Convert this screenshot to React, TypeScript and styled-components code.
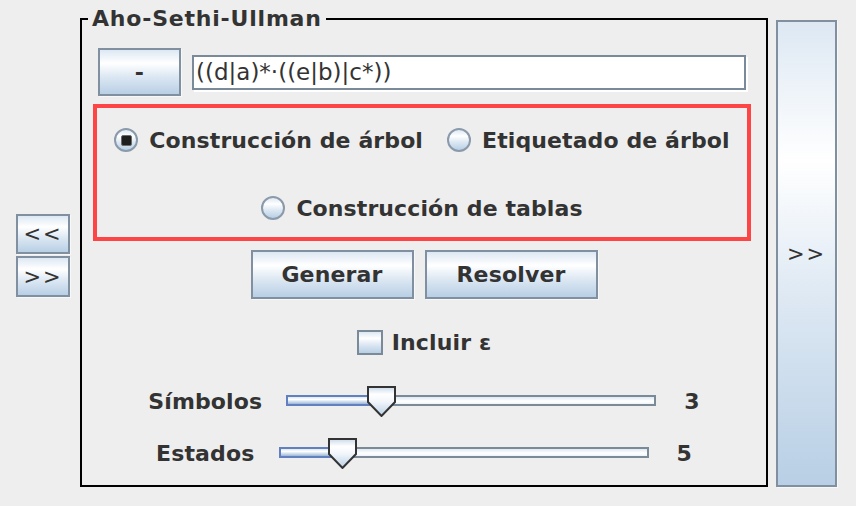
import React from "react";
import styled, { createGlobalStyle, css } from "styled-components";

const GlobalStyle = createGlobalStyle`
  html, body { margin: 0; padding: 0; background: #eeeeee; }
  body { font-family: "DejaVu Sans", "Noto Sans", sans-serif; color: #333333; }
  * { box-sizing: border-box; }
`;

const ocean = css`
  background: linear-gradient(
    to bottom,
    #dde8f3 0%,
    #ffffff 30%,
    #dde8f3 60%,
    #b8cfe5 100%
  );
`;

const Page = styled.div`
  width: 856px;
  height: 506px;
  display: flex;
  align-items: stretch;
  padding: 7px 19px 19px 16px;
`;

const SideColumn = styled.div`
  display: flex;
  flex-direction: column;
  gap: 2px;
  align-self: flex-start;
  margin-top: 207px;
  margin-right: 10px;
`;

const JButton = styled.button<{ $w: number; $h: number; $bold?: boolean }>`
  ${ocean};
  width: ${(p) => p.$w}px;
  height: ${(p) => p.$h}px;
  border: 2px solid #8090a0;
  box-shadow: 1px 1px 0 #f8f8f8;
  padding: 0;
  margin: 0;
  font-family: "DejaVu Sans", sans-serif;
  font-size: ${(p) => (p.$bold ? 22 : 21)}px;
  font-weight: ${(p) => (p.$bold ? 700 : 400)};
  letter-spacing: ${(p) => (p.$bold ? 0.15 : 2)}px;
  color: #333333;
  display: flex;
  align-items: center;
  justify-content: center;
  cursor: default;
`;

const TallButton = styled(JButton)`
  align-self: stretch;
  height: auto;
  margin-top: 13px;
  margin-left: 8px;
`;

const Panel = styled.fieldset`
  margin: 0;
  padding: 0 0 16px 0;
  width: 688px;
  min-width: 0;
  border: 2px solid #000000;
  display: flex;
  flex-direction: column;
  align-items: center;
`;

const Title = styled.legend`
  margin-left: 6px;
  padding: 0 4px;
  font-size: 22px;
  line-height: 24px;
  font-weight: 700;
  letter-spacing: 0.8px;
  color: #333333;
`;

const TopRow = styled.div`
  align-self: stretch;
  display: flex;
  align-items: center;
  gap: 11px;
  padding: 0 20px 0 16px;
  margin-top: 17px;
`;

const ExprField = styled.input`
  flex: 1;
  height: 35px;
  min-width: 0;
  border: 2px solid #7a8a99;
  box-shadow: 2px 2px 0 #ffffff;
  background: #ffffff;
  font-family: "DejaVu Sans", sans-serif;
  font-size: 23px;
  color: #333333;
  padding: 0 2px;
  outline: none;
`;

const ModeBox = styled.div`
  align-self: stretch;
  margin: 8px 15px 0 11px;
  height: 137px;
  border: 4px solid #fd4545;
  display: flex;
  flex-direction: column;
  align-items: center;
`;

const ModeRow = styled.div<{ $top: number }>`
  display: flex;
  align-items: center;
  gap: 24px;
  height: 24px;
  margin-top: ${(p) => p.$top}px;
`;

const RadioOption = styled.label`
  display: inline-flex;
  align-items: center;
  gap: 11px;
  font-size: 22px;
  font-weight: 700;
  letter-spacing: 0.1px;
  color: #333333;
  white-space: nowrap;
`;

const RadioCircle = styled.span`
  width: 24px;
  height: 24px;
  border-radius: 50%;
  border: 2px solid #8a9aab;
  ${ocean};
  display: flex;
  align-items: center;
  justify-content: center;
`;

const RadioDot = styled.span`
  width: 11px;
  height: 11px;
  border-radius: 2px;
  background: #1e1e1e;
  border: 1px solid #6a6a6a;
`;

const ButtonRow = styled.div`
  display: flex;
  gap: 11px;
  margin-top: 9px;
`;

const CheckRow = styled.label`
  display: flex;
  align-items: center;
  gap: 9px;
  margin-top: 31px;
  font-size: 22px;
  font-weight: 700;
  letter-spacing: 0.15px;
  color: #333333;
`;

const CheckBox = styled.span`
  width: 26px;
  height: 25px;
  border: 2px solid #7a8a99;
  ${ocean};
`;

const SliderRow = styled.div<{ $top: number }>`
  display: flex;
  align-items: center;
  margin-top: ${(p) => p.$top}px;
  height: 31px;
  font-size: 22px;
  font-weight: 700;
  letter-spacing: 0.15px;
  color: #333333;
`;

const SliderLabel = styled.span`
  margin-right: 24px;
`;

const SliderValue = styled.span`
  margin-left: 28px;
`;

const Slider = styled.div`
  position: relative;
  width: 370px;
  height: 31px;
  padding-top: 9px;
`;

const Track = styled.div`
  position: relative;
  height: 11px;
  border: 2px solid #7a8a99;
  background: linear-gradient(to bottom, #dfe8f1 0%, #ffffff 60%, #eef3f8 100%);
`;

const TrackFill = styled.div`
  position: absolute;
  left: -2px;
  top: -2px;
  height: 11px;
  border: 2px solid #6180bf;
  background: linear-gradient(
    to bottom,
    #dde8f3 0%,
    #ffffff 35%,
    #c9d9ea 70%,
    #9db6d6 100%
  );
`;

const Thumb = styled.svg`
  position: absolute;
  top: 0;
  width: 29px;
  height: 31px;
`;

function SliderThumb({ left, id }: { left: number; id: string }) {
  return (
    <Thumb style={{ left }} viewBox="0 0 29 31">
      <defs>
        <linearGradient id={id} x1="0" y1="0" x2="0" y2="1">
          <stop offset="0" stopColor="#c9d9ea" />
          <stop offset="0.25" stopColor="#ffffff" />
          <stop offset="0.5" stopColor="#f2f6fb" />
          <stop offset="1" stopColor="#b8cfe5" />
        </linearGradient>
      </defs>
      <polygon
        points="1,1 28,1 28,16 14.5,30 1,16"
        fill={`url(#${id})`}
        stroke="#333333"
        strokeWidth="2"
        strokeLinejoin="miter"
      />
    </Thumb>
  );
}

function JSlider({ thumbLeft, id }: { thumbLeft: number; id: string }) {
  return (
    <Slider>
      <Track>
        <TrackFill style={{ width: thumbLeft + 16 }} />
      </Track>
      <SliderThumb left={thumbLeft} id={id} />
    </Slider>
  );
}

function Radio({ label, selected }: { label: string; selected?: boolean }) {
  return (
    <RadioOption>
      <RadioCircle>{selected && <RadioDot />}</RadioCircle>
      {label}
    </RadioOption>
  );
}

export default function App() {
  return (
    <>
      <GlobalStyle />
      <Page>
        <SideColumn>
          <JButton $w={54} $h={40}>&lt;&lt;</JButton>
          <JButton $w={54} $h={41}>&gt;&gt;</JButton>
        </SideColumn>
        <Panel>
          <Title>Aho-Sethi-Ullman</Title>
          <TopRow>
            <JButton $w={83} $h={48} $bold>-</JButton>
            <ExprField readOnly value="((d|a)*·((e|b)|c*))" />
          </TopRow>
          <ModeBox>
            <ModeRow $top={20}>
              <Radio label="Construcción de árbol" selected />
              <Radio label="Etiquetado de árbol" />
            </ModeRow>
            <ModeRow $top={44}>
              <Radio label="Construcción de tablas" />
            </ModeRow>
          </ModeBox>
          <ButtonRow>
            <JButton $w={163} $h={49} $bold>Generar</JButton>
            <JButton $w={173} $h={49} $bold>Resolver</JButton>
          </ButtonRow>
          <CheckRow>
            <CheckBox />
            Incluir ε
          </CheckRow>
          <SliderRow $top={31}>
            <SliderLabel>Símbolos</SliderLabel>
            <JSlider thumbLeft={81} id="g1" />
            <SliderValue>3</SliderValue>
          </SliderRow>
          <SliderRow $top={21}>
            <SliderLabel>Estados</SliderLabel>
            <JSlider thumbLeft={49} id="g2" />
            <SliderValue>5</SliderValue>
          </SliderRow>
        </Panel>
        <TallButton $w={61} $h={0}>&gt;&gt;</TallButton>
      </Page>
    </>
  );
}
